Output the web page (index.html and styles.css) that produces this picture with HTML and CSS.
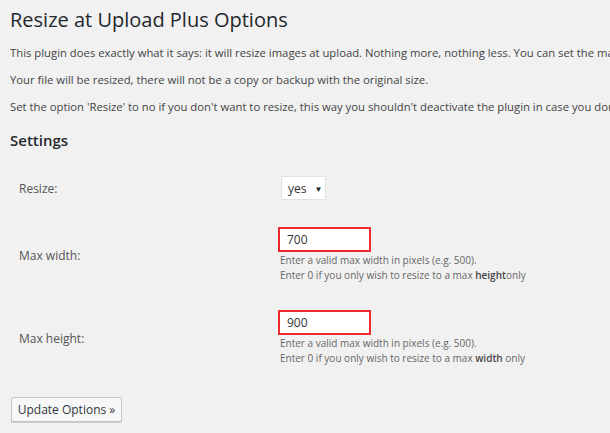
FILE: index.html
```html
<!DOCTYPE html>
<html lang="en">
<head>
<meta charset="utf-8">
<title>Resize at Upload Plus Options</title>
<link rel="stylesheet" href="styles.css">
</head>
<body>
<div class="wrap">
  <h1 class="title">Resize at Upload Plus Options</h1>
  <p class="intro">This plugin does exactly what it says: it will resize images at upload. Nothing more, nothing less. You can set the max width and height.</p>
  <p class="intro">Your file will be resized, there will not be a copy or backup with the original size.</p>
  <p class="intro">Set the option 'Resize' to no if you don't want to resize, this way you shouldn't deactivate the plugin in case you don't want to resize.</p>
  <h2 class="section">Settings</h2>
  <div class="form">
    <div class="row">
      <div class="label">Resize:</div>
      <div class="field">
        <div class="select"><span>yes</span><span class="arrow">▼</span></div>
      </div>
    </div>
    <div class="row">
      <div class="label">Max width:</div>
      <div class="field">
        <div class="input">700</div>
        <div class="help">Enter a valid max width in pixels (e.g. 500).</div>
        <div class="help">Enter 0 if you only wish to resize to a max <b>height</b>only</div>
      </div>
    </div>
    <div class="row">
      <div class="label">Max height:</div>
      <div class="field">
        <div class="input">900</div>
        <div class="help">Enter a valid max width in pixels (e.g. 500).</div>
        <div class="help">Enter 0 if you only wish to resize to a max <b>width</b> only</div>
      </div>
    </div>
  </div>
  <div class="actions">
    <button class="button" type="button">Update Options »</button>
  </div>
</div>
</body>
</html>
```
FILE: styles.css
```css
html, body {
  margin: 0;
  padding: 0;
  background: #f1f1f1;
}
body {
  font-family: "Open Sans", "Liberation Sans", sans-serif;
  color: #444;
  width: 610px;
  height: 433px;
  overflow: hidden;
}
.wrap {
  padding: 5px 0 0 10px;
}
.title {
  margin: 0;
  font-size: 20px;
  line-height: 29px;
  font-weight: 400;
  color: #23282d;
  white-space: nowrap;
}
.intro {
  margin: 0;
  padding-top: 9px;
  font-size: 11.3px;
  line-height: 18px;
  white-space: nowrap;
  overflow: hidden;
  color: #444;
}
.intro:first-of-type {
  padding-top: 10px;
}
.section {
  margin: 0;
  padding-top: 12px;
  font-size: 15px;
  line-height: 24px;
  font-weight: 600;
  color: #23282d;
}
.form {
  display: flex;
  flex-direction: column;
  gap: 27px;
  padding-top: 24px;
}
.row {
  display: grid;
  grid-template-columns: 268px 1fr;
  align-items: center;
}
.label {
  padding-left: 9px;
  font-size: 12px;
  color: #555;
}
.field {
  display: flex;
  flex-direction: column;
  align-items: flex-start;
}
.select {
  box-sizing: border-box;
  display: flex;
  align-items: center;
  gap: 8px;
  margin-left: 3px;
  height: 24px;
  width: 45px;
  padding: 0 5px 0 6px;
  background: #fff;
  border: 1px solid #e2e2e2;
  font-size: 12px;
  color: #333;
}
.arrow {
  font-size: 8px;
  color: #222;
}
.input {
  box-sizing: border-box;
  width: 93px;
  height: 25px;
  border: 2px solid #ed2a30;
  background: #fff;
  padding: 0 0 0 7px;
  font-size: 12px;
  line-height: 21px;
  color: #333;
  margin-bottom: 1px;
}
.help {
  margin-left: 2px;
  font-size: 10px;
  line-height: 15px;
  color: #666;
  white-space: nowrap;
}
.help b {
  font-weight: 600;
  color: #444;
}
.actions {
  padding: 31px 0 0 1px;
}
.button {
  box-sizing: border-box;
  height: 25px;
  width: 111px;
  padding: 0;
  font-family: "Open Sans", "Liberation Sans", sans-serif;
  font-size: 12px;
  color: #32373c;
  background: #f7f7f7;
  border: 1px solid #c4c4c4;
  border-radius: 2px;
  box-shadow: 0 1px 0 #ccc;
}
```
